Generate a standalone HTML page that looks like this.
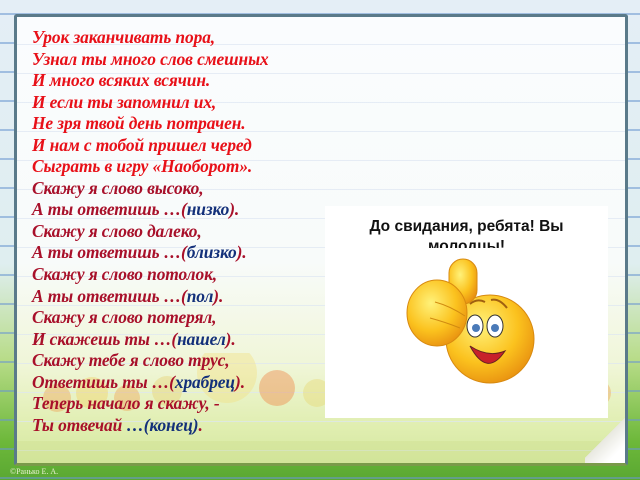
<!DOCTYPE html>
<html><head><meta charset="utf-8"><style>
html,body{margin:0;padding:0}
body{width:640px;height:480px;overflow:hidden;position:relative;
background:linear-gradient(180deg,#e4eef6 0%,#dfeef0 55%,#b8dc88 75%,#6db83a 92%,#5aa832 100%);}
.outlines{position:absolute;inset:0;background:repeating-linear-gradient(180deg,transparent 0 13px,#6a96d0 13px 15px,transparent 15px 29px);opacity:.55}
.frame{position:absolute;left:14px;top:14px;width:608px;height:446px;border:3px solid #5a7a8a;border-bottom-color:#7a9a4a;border-radius:3px;
background:linear-gradient(180deg,#fafcfe 0%,#f8fbfa 55%,#f0f6d8 78%,#e0eeb0 92%,#d4e8a0 100%);overflow:hidden}
.inlines{position:absolute;inset:0;background:repeating-linear-gradient(180deg,transparent 0 27px,#dde6f2 27px 28px,transparent 28px 29px);opacity:.7}
.trees{position:absolute;left:0;right:0;bottom:0;height:110px}
.txt{position:absolute;left:15px;top:10px;font:italic bold 17.4px/21.55px "Liberation Serif",serif;color:#a8102a;white-space:nowrap;letter-spacing:-0.1px}
.r{color:#e81018}.b{color:#13307a}
.pic{position:absolute;left:325px;top:206px;width:283px;height:212px;background:#fff}
.cap{position:absolute;left:0;width:283px;top:11px;text-align:center;font:bold 15.5px/20px "Liberation Sans",sans-serif;color:#111;height:31px;overflow:hidden}
.copy{position:absolute;left:10px;top:467px;font:8px "Liberation Serif",serif;color:#e8f0d0}
.curl{position:absolute;right:0;bottom:0;width:40px;height:50px;background:linear-gradient(135deg,transparent 50%,#e8e8e0 50%,#fff 80%)}
</style></head><body>
<div class="outlines"></div>
<div class="frame">
<div class="inlines"></div>
<svg class="trees" width="608" height="110" viewBox="0 0 608 110">
<g opacity=".4">
<circle cx="40" cy="45" r="14" fill="#f0a050"/><circle cx="75" cy="40" r="16" fill="#f3d060"/><circle cx="110" cy="45" r="13" fill="#f0a050"/><circle cx="150" cy="38" r="15" fill="#e8d070"/>
<circle cx="210" cy="20" r="30" fill="#f3e080"/><circle cx="260" cy="35" r="18" fill="#f08040"/><circle cx="300" cy="40" r="14" fill="#e8d870"/>
<circle cx="330" cy="48" r="14" fill="#f0a050"/><circle cx="380" cy="52" r="12" fill="#e8d870"/><circle cx="430" cy="45" r="14" fill="#f0a050"/><circle cx="480" cy="50" r="15" fill="#a8c860"/><circle cx="540" cy="45" r="13" fill="#f0d060"/><circle cx="580" cy="40" r="14" fill="#f0a050"/>
<rect x="0" y="88" width="608" height="22" fill="#d0e090"/>
</g></svg>
<div class="curl"></div>
<div class="txt">
<span class="r">Урок заканчивать пора,</span><br>
<span class="r">Узнал ты много слов смешных</span><br>
<span class="r">И много всяких всячин.</span><br>
<span class="r">И если ты запомнил их,</span><br>
<span class="r">Не зря твой день потрачен.</span><br>
<span class="r">И нам с тобой пришел черед</span><br>
<span class="r">Сыграть в игру «Наоборот».</span><br>
Скажу я слово высоко,<br>
А ты ответишь …(<span class="b">низко</span>).<br>
Скажу я слово далеко,<br>
А ты ответишь …(<span class="b">близко</span>).<br>
Скажу я слово потолок,<br>
А ты ответишь …(<span class="b">пол</span>).<br>
Скажу я слово потерял,<br>
И скажешь ты …(<span class="b">нашел</span>).<br>
Скажу тебе я слово трус,<br>
Ответишь ты …(<span class="b">храбрец</span>).<br>
Теперь начало я скажу, -<br>
Ты отвечай <span class="b">…(конец)</span>.
</div>
</div>
<div class="pic">
<div class="cap">До свидания, ребята! Вы<br>молодцы!</div>
<svg style="position:absolute;left:0;top:0" width="283" height="212" viewBox="0 0 283 212">
<defs><radialGradient id="g" cx=".4" cy=".35" r=".7"><stop offset="0" stop-color="#fff27a"/><stop offset=".6" stop-color="#fbc21e"/><stop offset="1" stop-color="#e89010"/></radialGradient></defs>
<circle cx="165" cy="133" r="44" fill="url(#g)" stroke="#d88a10"/>
<ellipse cx="150" cy="120" rx="8" ry="11" fill="#fff" stroke="#333"/><circle cx="151" cy="122" r="4" fill="#4a7ab8"/>
<ellipse cx="170" cy="120" rx="8" ry="11" fill="#fff" stroke="#333"/><circle cx="170" cy="122" r="4" fill="#4a7ab8"/>
<path d="M145 140 Q162 172 180 145 Q163 152 145 140Z" fill="#c8202a" stroke="#622"/>
<path d="M145 98 Q152 92 160 96 M166 94 Q174 92 182 102" stroke="#a06010" stroke-width="2" fill="none"/>
<rect x="124" y="53" width="28" height="45" rx="14" fill="url(#g)" stroke="#d88a10"/>
<ellipse cx="112" cy="107" rx="30" ry="33" fill="url(#g)" stroke="#d88a10"/>
<path d="M110 96 Q125 100 140 110 M105 112 Q120 116 135 122" stroke="#d08a10" fill="none"/>
</svg>
</div>
<div class="copy">©Ранько Е. А.</div>
</body></html>
